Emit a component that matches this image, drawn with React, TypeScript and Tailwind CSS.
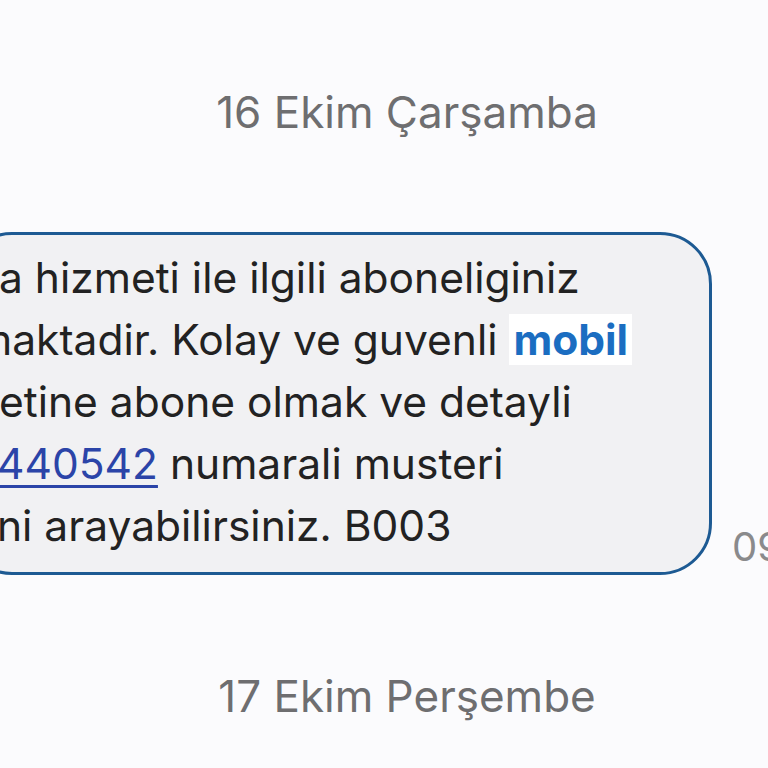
export default function App() {
  return (
    <div
      className="w-[768px] h-[768px] overflow-hidden bg-[#fbfbfd] flex flex-col"
      style={{ fontFamily: 'Inter, "Noto Sans", sans-serif' }}
    >
      <div className="mt-[86px] h-[52px] flex justify-center pl-[46px] text-[44px] leading-[52px] text-[#6e6e70] whitespace-nowrap">
        16 Ekim Çarşamba
      </div>

      <div className="mt-[94px] flex items-end">
        <div className="-ml-[40px] w-[752px] shrink-0 h-[343px] rounded-[52px] border-[3px] border-[#1d5a93] bg-[#f1f1f3] pl-[36px] pt-[12px] text-[42.5px] leading-[62px] text-[#222222] whitespace-nowrap overflow-hidden">
          <div>a hizmeti ile ilgili aboneliginiz</div>
          <div className="-ml-[24px]">
            maktadir. Kolay ve guvenli{' '}
            <span className="bg-white px-[4px] font-bold text-[#1b6dc1]">mobil</span>
          </div>
          <div>etine abone olmak ve detayli</div>
          <div className="-ml-[2px]">
            <span className="text-[#2b44a8] underline decoration-[3px] underline-offset-[6px]">440542</span>{' '}
            numarali musteri
          </div>
          <div className="-ml-[2px]">ni arayabilirsiniz. B003</div>
        </div>
        <div className="ml-[20px] mb-[4px] text-[40px] leading-[48px] text-[#8a8a8c] whitespace-nowrap">09:12</div>
      </div>

      <div className="mt-[95px] h-[52px] flex justify-center pl-[46px] text-[44px] leading-[52px] text-[#6e6e70] whitespace-nowrap">
        17 Ekim Perşembe
      </div>
    </div>
  )
}
